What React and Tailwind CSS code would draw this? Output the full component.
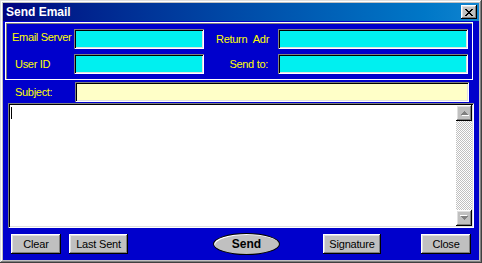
import React from 'react';

const ui = { fontFamily: '"Liberation Sans", Arial, sans-serif' };

const sunken = 'shadow-[inset_1px_1px_#808080,inset_-1px_-1px_#ffffff,inset_2px_2px_#000000,inset_-2px_-2px_#dfdfdf]';
const raised = 'shadow-[inset_-1px_-1px_#000000,inset_1px_1px_#ffffff,inset_-2px_-2px_#808080,inset_2px_2px_#dfdfdf]';
const label = 'whitespace-nowrap text-[11px] tracking-[-0.3px] text-[#ffff00] leading-none';

const Field = ({ width, color = 'bg-[#00f0f0]' }) => (
  <div className={`h-[20px] ${width} ${color} ${sunken}`} />
);

const Button = ({ text, width, ml }) => (
  <button
    className={`h-[20px] ${width} ${ml} bg-[#c0c0c0] ${raised} whitespace-nowrap text-[11px] tracking-[-0.2px] leading-none text-black flex items-center justify-center`}
  >
    {text}
  </button>
);

const Arrow = ({ down }) => (
  <div className={`w-[16px] h-[16px] bg-[#c0c0c0] ${raised} flex items-center justify-center`}>
    <svg width="9" height="6" viewBox="0 0 9 6" className={down ? 'rotate-180' : ''} shapeRendering="crispEdges">
      <path d="M4 1h1v1H4zM3 2h3v1H3zM2 3h5v1H2zM1 4h7v1H1z" fill="#808080" />
      <path d="M2 5h7v1H2z" fill="#ffffff" />
    </svg>
  </div>
);

export default function App() {
  return (
    <div className="w-[482px] h-[263px] bg-[#c0c0c0] p-[3px] flex flex-col shadow-[inset_-1px_-1px_#404040,inset_1px_1px_#dfdfdf,inset_-2px_-2px_#808080,inset_2px_2px_#ffffff]" style={ui}>
      {/* title bar */}
      <div className="h-[18px] flex items-center justify-between pl-[3px] pr-[2px] bg-gradient-to-r from-[#000080] to-[#1084d0]">
        <span className="text-white font-bold text-[12px] leading-none">Send Email</span>
        <div className={`w-[16px] h-[14px] bg-[#c0c0c0] ${raised} flex items-center justify-center`}>
          <svg width="8" height="7" viewBox="0 0 8 7" shapeRendering="crispEdges">
            <path d="M0 0h2v1H0zM6 0h2v1H6zM1 1h2v1H1zM5 1h2v1H5zM2 2h4v1H2zM3 3h2v1H3zM2 4h4v1H2zM1 5h2v1H1zM5 5h2v1H5zM0 6h2v1H0zM6 6h2v1H6z" fill="#000" />
          </svg>
        </div>
      </div>

      {/* client area */}
      <div className="flex-1 bg-[#0000cc] flex flex-col">
        <div className="mt-[1px] ml-[2px] w-[468px] h-[58px] border border-white shadow-[inset_1px_1px_#808080] pt-[6px] flex flex-col gap-[5px]">
          <div className="flex items-center h-[20px]">
            <span className={`w-[68px] pl-[6px] -mt-[3px] ${label}`}>Email Server</span>
            <Field width="w-[130px]" />
            <span className={`w-[74px] pr-[9px] text-right ${label}`}>Return&nbsp;&nbsp;Adr</span>
            <Field width="w-[190px]" />
          </div>
          <div className="flex items-center h-[20px]">
            <span className={`w-[68px] pl-[9px] ${label}`}>User ID</span>
            <Field width="w-[130px]" />
            <span className={`w-[74px] pr-[10px] text-right ${label}`}>Send to:</span>
            <Field width="w-[190px]" />
          </div>
        </div>

        <div className="mt-[2px] flex items-center h-[20px]">
          <span className={`w-[72px] pl-[12px] ${label}`}>Subject:</span>
          <Field width="w-[394px]" color="bg-[#ffffc8]" />
        </div>

        <div className={`mt-[1px] ml-[5px] w-[466px] h-[125px] bg-white ${sunken} p-[2px] flex`}>
          <div className="flex-1">
            <div className="ml-[1px] mt-[2px] w-[1px] h-[12px] bg-black" />
          </div>
          <div className="w-[16px] flex flex-col bg-[conic-gradient(#c0c0c0_25%,#ffffff_0_50%,#c0c0c0_0_75%,#ffffff_0)] bg-[length:2px_2px]">
            <Arrow />
            <div className="flex-1" />
            <Arrow down />
          </div>
        </div>

        <div className="mt-[5px] flex items-center h-[22px]">
          <Button text="Clear" width="w-[50px]" ml="ml-[8px]" />
          <Button text="Last Sent" width="w-[59px]" ml="ml-[8px]" />
          <button className="ml-[85px] w-[67px] h-[22px] rounded-[50%] bg-[#c0c0c0] border border-black shadow-[inset_1px_1px_#ffffff] text-[12px] font-bold text-black flex items-center justify-center leading-none">
            Send
          </button>
          <Button text="Signature" width="w-[58px]" ml="ml-[43px]" />
          <Button text="Close" width="w-[50px]" ml="ml-[40px]" />
        </div>
      </div>
    </div>
  );
}
